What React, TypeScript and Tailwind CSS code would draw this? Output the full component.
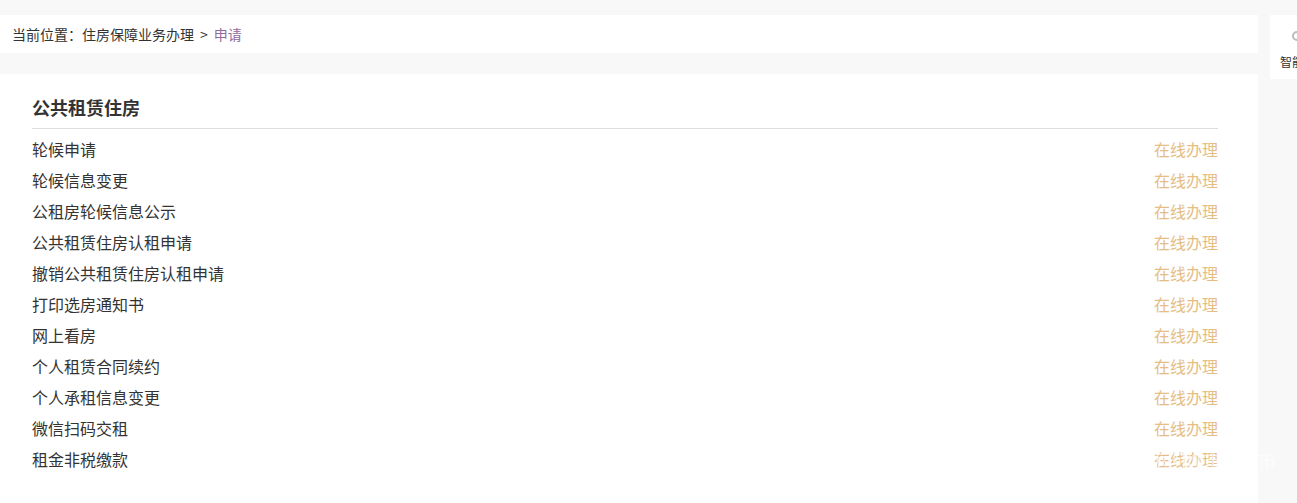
import React from "react";

const items = [
  "轮候申请",
  "轮候信息变更",
  "公租房轮候信息公示",
  "公共租赁住房认租申请",
  "撤销公共租赁住房认租申请",
  "打印选房通知书",
  "网上看房",
  "个人租赁合同续约",
  "个人承租信息变更",
  "微信扫码交租",
  "租金非税缴款",
];

export default function App() {
  return (
    <div
      className="relative w-[1297px] h-[503px] overflow-hidden bg-[#f8f8f8] pt-[15px]"
      style={{ fontFamily: '"Noto Sans CJK SC", "Noto Sans", sans-serif' }}
    >
      <div className="flex gap-[12px]">
        <div className="w-[1258px] shrink-0 flex flex-col gap-[21px]">
          <div className="h-[38px] bg-white flex items-center pl-[12px] text-[14px] text-[#333]">
            <span>当前位置：住房保障业务办理</span>
            <span className="mx-[6px]">&gt;</span>
            <span className="text-[#8e6a9e]">申请</span>
          </div>
          <div className="bg-white h-[460px] pl-[32px] pr-[40px] pt-[21px]">
            <div className="text-[18px] leading-[24px] font-bold text-[#333] pb-[9px] border-b border-[#dddddd]">
              公共租赁住房
            </div>
            <div className="pt-[4px]">
              {items.map((t) => (
                <div
                  key={t}
                  className="flex justify-between items-center h-[31px] text-[16px]"
                >
                  <span className="text-[#333]">{t}</span>
                  <span className="text-[#e5bd85]">在线办理</span>
                </div>
              ))}
            </div>
          </div>
        </div>
        <div className="w-[80px] shrink-0 h-[64px] bg-white flex flex-col items-start pl-[10px] pt-[16px]">
          <div className="ml-[12px] w-[10px] h-[10px] rounded-full border-[2px] border-[#bbb]" />
          <div className="mt-[12px] text-[12px] text-[#333] whitespace-nowrap">智能客服</div>
        </div>
      </div>
      <div className="absolute left-[1150px] top-[447px] text-[18px] text-white/70 whitespace-nowrap">
        返回城市选择市
      </div>
    </div>
  );
}
